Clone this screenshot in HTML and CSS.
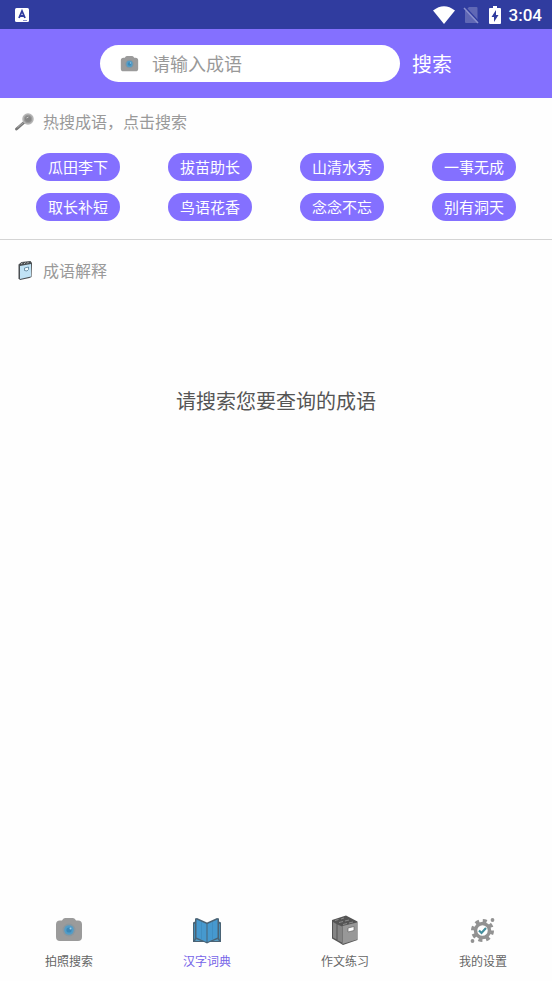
FILE: index.html
```html
<!DOCTYPE html>
<html lang="zh-CN">
<head>
<meta charset="utf-8">
<meta name="viewport" content="width=device-width, initial-scale=1">
<title>汉字词典</title>
<link rel="stylesheet" href="styles.css">
</head>
<body>
<svg width="0" height="0" class="sprite" aria-hidden="true">
  <symbol id="camera" viewBox="0 0 28 24">
    <path d="M7 2.500Q8 0 10 0h8q2 0 3 2.500h2q4 0 4 4V19q0 4-4 4H5q-4 0-4-4V6.500q0-4 4-4z" fill="#9b9b9b"/>
    <circle cx="14" cy="12" r="6.500" fill="#8b979e"/>
    <circle cx="14" cy="12" r="4.800" fill="#529cc7"/>
    <circle cx="14" cy="12" r="2.600" fill="#3b87b7"/>
    <circle cx="15.500" cy="10.500" r="1" fill="#9cccec"/>
  </symbol>
</svg>
<div class="app">
  <div class="status">
    <svg class="status-app" viewBox="0 0 14 14"><rect width="14" height="14" rx="1.500" fill="#fff"/><path d="m4 10 3-7 3 7M5 8h4" fill="none" stroke="#303c9f" stroke-width="1.800"/><path d="M8 12.500h4" stroke="#8d94cc"/></svg>
    <svg class="wifi" viewBox="0 0 22 18"><path d="M0 4.500Q11-4 22 4.500L11 18z" fill="#fff"/></svg>
    <svg class="sim" viewBox="0 0 16 18"><path d="M6 1h7.500q1 0 1 1v15H3q-1 0-1-1V5z" fill="#6068b5"/><path d="m2 1 14 15" stroke="#303c9f" stroke-width="1.500"/><path d="m1 2 14 15" stroke="#8b91cd" stroke-width="1.500"/></svg>
    <svg class="battery" viewBox="0 0 12 18"><path d="M4 0h4v2h3q1 0 1 1v14q0 1-1 1H1q-1 0-1-1V3q0-1 1-1h3z" fill="#fff"/><path d="M7 4 2.500 11H5v5l4.500-7H7z" fill="#303c9f"/></svg>
    <span class="clock">3:04</span>
  </div>

  <form class="header">
    <label class="search-box">
      <svg class="search-camera"><use href="#camera"/></svg>
      <input type="text" placeholder="请输入成语" aria-label="请输入成语">
    </label>
    <button class="search-button" type="button">搜索</button>
  </form>

  <section class="hot">
    <h2 class="section-title">
      <svg class="title-icon" viewBox="0 0 20 20"><path d="m1.500 18 8-7" stroke="#777" stroke-width="2.800" stroke-linecap="round"/><path d="m2.500 16.500 6-5" stroke="#aaa"/><circle cx="13" cy="8" r="5" fill="#999" stroke="#b5b5b5" stroke-width="1.500"/><circle cx="13" cy="8" r="3" fill="#858585"/><path d="m11.500 7 2-1" stroke="#ccc"/></svg>
      热搜成语，点击搜索
    </h2>
    <div class="chips">
      <button class="chip" type="button">瓜田李下</button>
      <button class="chip" type="button">拔苗助长</button>
      <button class="chip" type="button">山清水秀</button>
      <button class="chip" type="button">一事无成</button>
      <button class="chip" type="button">取长补短</button>
      <button class="chip" type="button">鸟语花香</button>
      <button class="chip" type="button">念念不忘</button>
      <button class="chip" type="button">别有洞天</button>
    </div>
  </section>

  <main class="meaning">
    <h2 class="section-title">
      <svg class="title-icon" viewBox="0 0 20 20"><path d="m3.500 4.500 3-2.500 9-1 1.500 2-.5 14-2 1-9.500 2-1.500-1.500z" fill="#4a4f52"/><path d="m5 6 11-2v12.500L5 19z" fill="#c1e3f5"/><path d="m6 4 1.500-1m1.500 1 1.500-1.500m1.500 1L13.500 2" stroke="#bbb"/><path d="m9.500 8 4-1v2.500L12 11l-2.500-.5z" fill="#f4fbfe" stroke="#537b94" stroke-width=".8"/></svg>
      成语解释
    </h2>
    <p class="empty">请搜索您要查询的成语</p>
  </main>

  <nav class="tabs">
    <a class="tab" href="#photo">
      <svg class="tab-icon"><use href="#camera"/></svg>
      拍照搜索
    </a>
    <a class="tab active" href="#dictionary" aria-current="page">
      <svg class="tab-icon tall" viewBox="0 0 30 30"><path d="M1 7.500 3 6.500V3.500L5 3l10 4.500L25 3l2 .5v3l2 1V27H18l-3 1.500L12 27H1z" fill="#4a6375"/><path d="M4.500 4.500 14.500 9v18L4.500 22.500zM25.500 4.500 15.500 9v18l10-4.500z" fill="#4699cf"/><path d="M2 9l1-.5V23l-1 2zm26 0-1-.5V23l1 2z" fill="#438eb9"/><path d="m3 25.800 1.500-1.500L9 26zm24 0-1.500-1.500L21 26z" fill="#5ca6d0"/><path d="M9.500 7v17m11-17v17" stroke="#3c87b9" stroke-width=".6"/></svg>
      汉字词典
    </a>
    <a class="tab" href="#writing">
      <svg class="tab-icon tall" viewBox="0 0 30 30"><path d="m2 5 14-4.500 11.500 6V25L13 30l-4-2.500-7-4z" fill="#555"/><path d="m3 7 3.500 2v15.500L3 22.500zm4.500 2.500 4.500 2v16l-4.500-2.300z" fill="#858585"/><path d="m12.500 11 14.500-3.500v17L12.500 29z" fill="#989898"/><path d="m5 5.500 3.500-1M9 7.500l4-1M13 9.500l4-1M11 4l3-1m1 3 4-1m0 3 4-1" stroke="#8a8a8a"/><path d="m18 13 6-1.500v4L18 17z" fill="#fff" stroke="#666" stroke-width=".7"/></svg>
      作文练习
    </a>
    <a class="tab" href="#settings">
      <svg class="tab-icon tall" viewBox="0 0 30 30"><circle cx="14.500" cy="15.500" r="9.800" fill="none" stroke="#929292" stroke-width="3.400" stroke-dasharray="4 3.697"/><circle cx="14.500" cy="15.500" r="7" fill="#fff" stroke="#929292" stroke-width="3.500"/><path d="m11 15.500 2.500 2.500 4.500-5" fill="none" stroke="#438e9d" stroke-width="2.200"/><circle cx="4.500" cy="26" r="1.900" fill="#929292"/><circle cx="24.500" cy="5" r="1.900" fill="#929292"/></svg>
      我的设置
    </a>
  </nav>
</div>
</body>
</html>
```
FILE: styles.css
```css
* {
  box-sizing: border-box;
}

body {
  margin: 0;
  background: #fefefe;
  color: #555;
  font-family: "Noto Sans CJK SC", sans-serif;
}

button,
input {
  border: 0;
  padding: 0;
  font-family: inherit;
}

.sprite {
  position: absolute;
}

.app {
  display: flex;
  flex-direction: column;
  min-height: 100vh;
}

.status {
  display: flex;
  align-items: center;
  height: 29px;
  padding: 0 10px 0 15px;
  background: #303c9f;
  color: #fff;
}

.status-app {
  width: 14px;
  height: 14px;
  margin-right: auto;
}

.wifi {
  width: 22px;
  height: 18px;
}

.sim {
  width: 16px;
  height: 18px;
  margin-left: 8px;
}

.battery {
  width: 12px;
  height: 18px;
  margin: 0 8px 0 10px;
}

.clock {
  font: 500 17px/30px Roboto, sans-serif;
}

.header {
  display: flex;
  align-items: center;
  gap: 12px;
  height: 69px;
  padding: 0 100px;
  background: #8470ff;
}

.search-box {
  display: flex;
  flex: 1;
  align-items: center;
  gap: 13px;
  min-width: 0;
  height: 37px;
  padding: 0 20px;
  border-radius: 19px;
  background: #fff;
}

.search-camera {
  flex: none;
  width: 19px;
  height: 16px;
}

.search-box input {
  flex: 1;
  min-width: 0;
  height: 26px;
  padding-bottom: 2px;
  outline: 0;
  background: transparent;
  color: #555;
  font-size: 18px;
}

.search-box input::placeholder {
  color: #999;
}

.search-button {
  background: transparent;
  color: #fff;
  font-size: 20px;
  line-height: 28px;
}

.hot {
  padding-bottom: 18px;
  border-bottom: 1px solid #d4d4d4;
}

.section-title {
  display: flex;
  align-items: center;
  gap: 8px;
  height: 46px;
  margin: 0;
  padding: 0 15px;
  color: #999;
  font-size: 16px;
  font-weight: 400;
}

.title-icon {
  width: 20px;
  height: 20px;
}

.chips {
  display: grid;
  grid-template-columns: repeat(4, 1fr);
  gap: 12px 0;
  justify-items: center;
  padding: 9px 12px 0;
}

.chip {
  width: 84px;
  height: 28px;
  border-radius: 14px;
  background: #8470ff;
  color: #fff;
  font-size: 15px;
  line-height: 28px;
}

.meaning {
  flex: 1;
  padding-top: 7px;
}

.empty {
  margin: 94px 0 0;
  font-size: 20px;
  line-height: 28px;
  text-align: center;
}

.tabs {
  display: grid;
  grid-template-columns: repeat(4, 1fr);
  padding-bottom: 10px;
}

.tab {
  display: flex;
  flex-direction: column;
  align-items: center;
  gap: 6px;
  color: #666;
  font-size: 12px;
  line-height: 20px;
  text-decoration: none;
}

.tab.active {
  color: #7665e8;
}

.tab-icon {
  width: 28px;
  height: 30px;
}

.tab-icon.tall {
  width: 30px;
}
```
